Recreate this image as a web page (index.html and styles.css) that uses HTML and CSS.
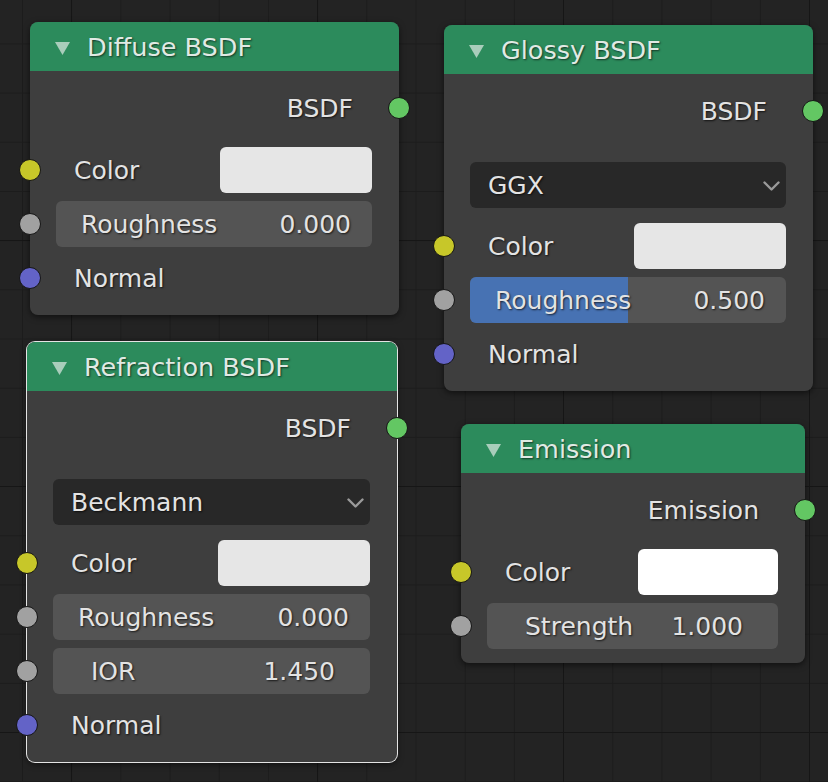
FILE: index.html
```html
<!DOCTYPE html>
<html lang="en">
<head>
  <meta charset="UTF-8" />
  <title>Shader Nodes</title>
  <link rel="stylesheet" href="styles.css">
</head>
<body>
  <div class="canvas">

    <div class="node node-diffuse">
      <div class="node-header">
        <svg class="collapse" width="15" height="13" viewBox="0 0 15 13"><polygon points="0,0 15,0 7.5,13" /></svg>
        <span>Diffuse BSDF</span>
      </div>
      <div class="node-body">
        <div class="row output"><span class="label">BSDF</span><span class="socket shader"></span></div>
        <div class="inputs">
          <div class="row"><span class="socket color"></span><span class="label">Color</span><span class="swatch"></span></div>
          <div class="row"><span class="socket float"></span><div class="field"><span>Roughness</span><span>0.000</span></div></div>
          <div class="row"><span class="socket vector"></span><span class="label">Normal</span></div>
        </div>
      </div>
    </div>

    <div class="node node-glossy">
      <div class="node-header">
        <svg class="collapse" width="15" height="13" viewBox="0 0 15 13"><polygon points="0,0 15,0 7.5,13" /></svg>
        <span>Glossy BSDF</span>
      </div>
      <div class="node-body">
        <div class="row output"><span class="label">BSDF</span><span class="socket shader"></span></div>
        <div class="dropdown">
          <span>GGX</span>
          <svg class="chevron" width="17" height="10" viewBox="0 0 17 10"><polyline points="1.5,1.5 8.5,8.5 15.5,1.5" /></svg>
        </div>
        <div class="inputs">
          <div class="row"><span class="socket color"></span><span class="label">Color</span><span class="swatch"></span></div>
          <div class="row"><span class="socket float"></span><div class="field"><div class="fill" style="width: 50%"></div><span>Roughness</span><span>0.500</span></div></div>
          <div class="row"><span class="socket vector"></span><span class="label">Normal</span></div>
        </div>
      </div>
    </div>

    <div class="node node-refraction selected">
      <div class="node-header">
        <svg class="collapse" width="15" height="13" viewBox="0 0 15 13"><polygon points="0,0 15,0 7.5,13" /></svg>
        <span>Refraction BSDF</span>
      </div>
      <div class="node-body">
        <div class="row output"><span class="label">BSDF</span><span class="socket shader"></span></div>
        <div class="dropdown">
          <span>Beckmann</span>
          <svg class="chevron" width="17" height="10" viewBox="0 0 17 10"><polyline points="1.5,1.5 8.5,8.5 15.5,1.5" /></svg>
        </div>
        <div class="inputs">
          <div class="row"><span class="socket color"></span><span class="label">Color</span><span class="swatch"></span></div>
          <div class="row"><span class="socket float"></span><div class="field"><span>Roughness</span><span>0.000</span></div></div>
          <div class="row"><span class="socket float"></span><div class="field field-wide"><span>IOR</span><span>1.450</span></div></div>
          <div class="row"><span class="socket vector"></span><span class="label">Normal</span></div>
        </div>
      </div>
    </div>

    <div class="node node-emission">
      <div class="node-header">
        <svg class="collapse" width="15" height="13" viewBox="0 0 15 13"><polygon points="0,0 15,0 7.5,13" /></svg>
        <span>Emission</span>
      </div>
      <div class="node-body">
        <div class="row output"><span class="label">Emission</span><span class="socket shader"></span></div>
        <div class="inputs">
          <div class="row"><span class="socket color"></span><span class="label">Color</span><span class="swatch white"></span></div>
          <div class="row"><span class="socket float"></span><div class="field field-wide"><span>Strength</span><span>1.000</span></div></div>
        </div>
      </div>
    </div>

  </div>
</body>
</html>
```

FILE: styles.css
```css
body {
  margin: 0;
  background: #232323;
  overflow: hidden;
  font-family: "DejaVu Sans", "Liberation Sans", sans-serif;
  font-size: 25px;
  color: #e3e3e3;
}
.canvas {
  position: relative;
  width: 828px;
  height: 782px;
  background-color: #232323;
  background-image:
    linear-gradient(to right, #161616 1px, transparent 1px),
    linear-gradient(to bottom, #161616 1px, transparent 1px),
    linear-gradient(to right, #1c1c1c 1px, transparent 1px),
    linear-gradient(to bottom, #1c1c1c 1px, transparent 1px);
  background-size: 246px 246px, 246px 246px, 49.2px 49.2px, 49.2px 49.2px;
  background-position: 71px 0, 0 240px, 22px 0, 0 43.4px;
}
.node {
  position: absolute;
  background: #3e3e3e;
  border-radius: 8px;
  box-shadow: 0 2px 6px rgba(0,0,0,0.55);
}
.node.selected {
  box-shadow: 0 0 0 1px #e4e4e4, 0 2px 6px rgba(0,0,0,0.55);
}
.node-diffuse { left: 30px; top: 22px; width: 369px; }
.node-glossy { left: 444px; top: 25px; width: 369px; }
.node-refraction { left: 27px; top: 342px; width: 370px; }
.node-emission { left: 461px; top: 424px; width: 344px; }

.node-header {
  height: 49px;
  background: #2c8b5c;
  border-radius: 8px 8px 0 0;
  display: flex;
  align-items: center;
  padding-left: 25px;
  font-size: 25.5px;
  color: #e0eae4;
  text-shadow: 1px 1px 2px rgba(0,0,0,0.6);
}
.collapse {
  fill: #a9cdbb;
  margin-right: 17px;
  margin-top: 4px;
}
.node-body {
  padding: 14px 0;
}
.label, .field, .dropdown {
  text-shadow: 1px 1px 2px rgba(0,0,0,0.7);
  white-space: nowrap;
}
.row {
  position: relative;
  height: 46px;
  display: flex;
  align-items: center;
  padding: 0 27px 0 26px;
}
.row > .label {
  flex: 1;
  padding-left: 18px;
}
.row.output {
  justify-content: flex-end;
  padding-right: 46px;
  margin-bottom: 16px;
}
.row.output .label {
  flex: none;
}
.inputs {
  display: flex;
  flex-direction: column;
  gap: 8px;
}
.socket {
  position: absolute;
  left: -11px;
  top: 12px;
  width: 20px;
  height: 20px;
  border-radius: 50%;
  border: 1px solid #151515;
}
.output .socket {
  left: auto;
  right: -11px;
}
.socket.shader { background: #63c763; }
.socket.color { background: #c7c729; }
.socket.float { background: #a1a1a1; }
.socket.vector { background: #6363c7; }

.swatch {
  width: 48%;
  height: 46px;
  border-radius: 6px;
  background: #e6e6e6;
}
.swatch.white {
  background: #ffffff;
}
.field {
  position: relative;
  flex: 1;
  height: 46px;
  border-radius: 6px;
  background: #545454;
  display: flex;
  align-items: center;
  justify-content: space-between;
  padding: 0 21px 0 25px;
  overflow: hidden;
}
.field-wide {
  padding: 0 35px 0 38px;
}
.field span {
  position: relative;
}
.fill {
  position: absolute;
  left: 0;
  top: 0;
  bottom: 0;
  background: #4772b3;
}
.dropdown {
  position: relative;
  height: 46px;
  margin: 28px 27px 15px 26px;
  border-radius: 6px;
  background: #282828;
  display: flex;
  align-items: center;
  padding-left: 18px;
}
.chevron {
  position: absolute;
  right: 6px;
  top: 19px;
  fill: none;
  stroke: #9a9a9a;
  stroke-width: 2.4;
  stroke-linecap: round;
  stroke-linejoin: round;
}
```
